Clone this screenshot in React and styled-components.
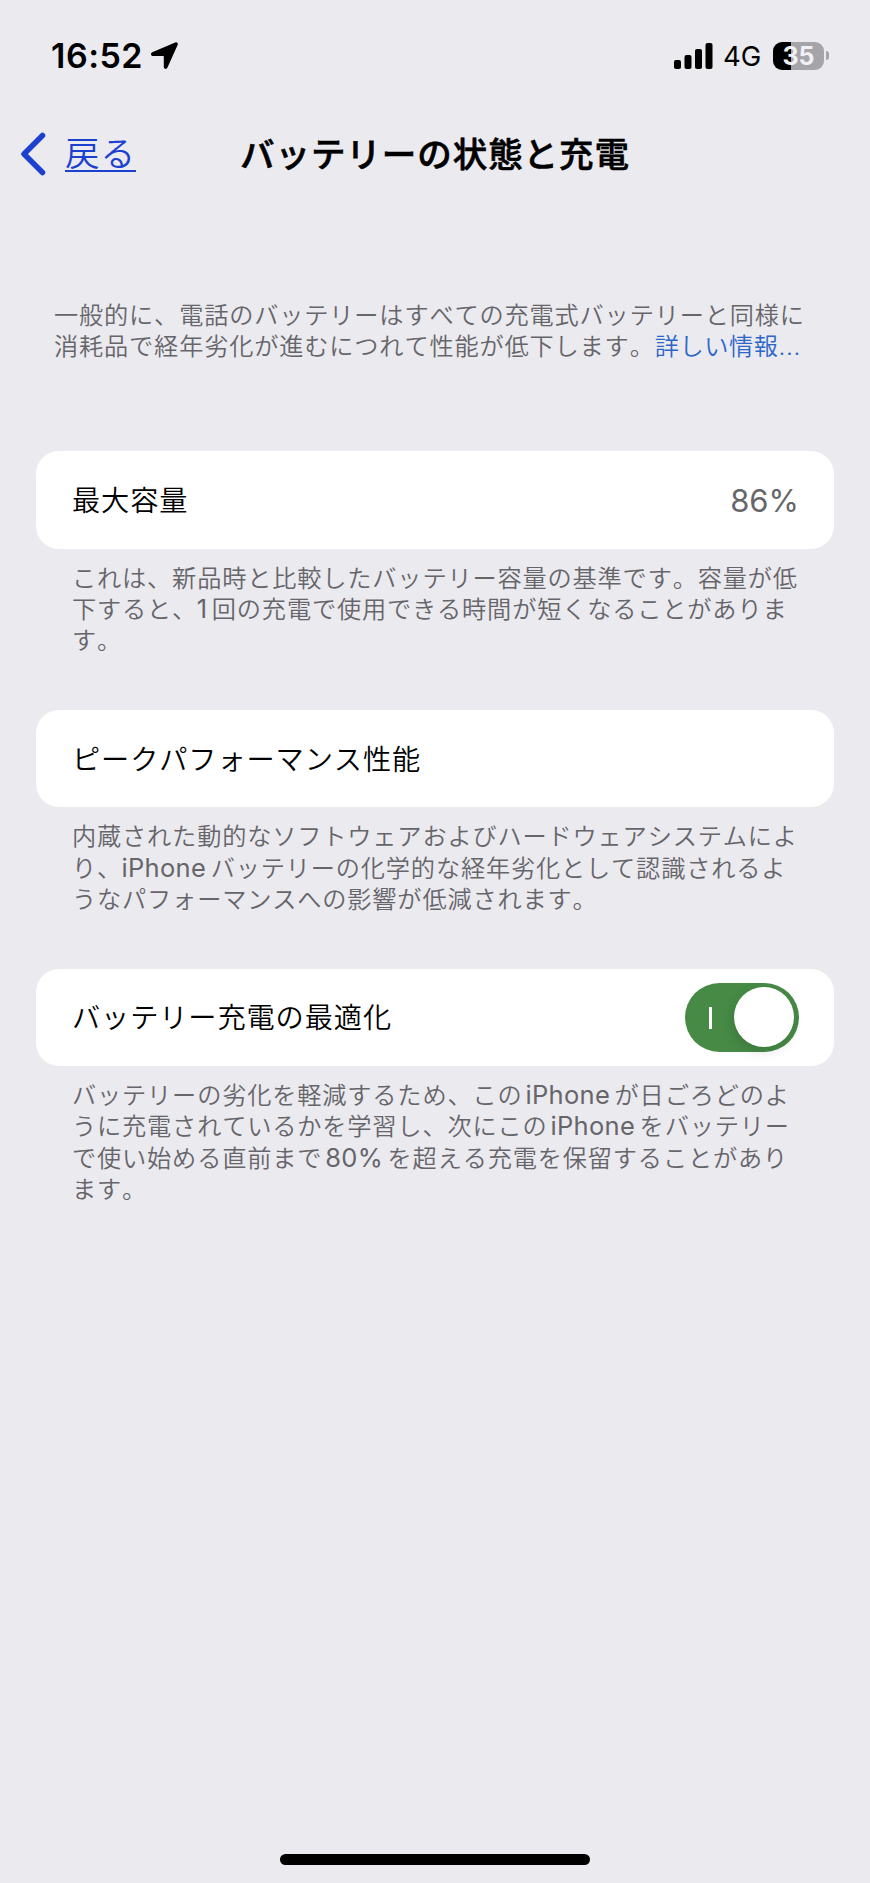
import React from 'react';
import styled, { createGlobalStyle } from 'styled-components';

const GlobalStyle = createGlobalStyle`
  *, *::before, *::after {
    box-sizing: border-box;
  }
  html {
    background: #ebeaef;
  }
  body {
    margin: 0;
    font-family: Inter, 'Noto Sans CJK JP', sans-serif;
    font-kerning: none;
    color: #000;
  }
`;

const Screen = styled.div`
  width: 870px;
  height: 1883px;
  display: flex;
  flex-direction: column;
  background: #ebeaef;
  overflow: hidden;
`;

const StatusBar = styled.header`
  height: 111px;
  padding: 0 41px 0 51px;
  display: flex;
  align-items: center;
  justify-content: space-between;
`;

const StatusGroup = styled.div`
  display: flex;
  align-items: center;
`;

const Time = styled.span`
  width: 100px;
  font-size: 34px;
  font-weight: 600;
  line-height: 40px;
  letter-spacing: 0.5px;
  white-space: nowrap;
`;

const Network = styled.span`
  margin: 1px 0 0 10px;
  width: 50px;
  font-size: 27.5px;
  line-height: 40px;
  white-space: nowrap;
`;

const Battery = styled.span`
  width: 51px;
  height: 28px;
  border-radius: 9px;
  background: linear-gradient(to right, #000 18px, #a5a4a9 18px);
  color: #f1f0f5;
  font-size: 25px;
  font-weight: 700;
  line-height: 28px;
  text-align: center;
`;

const BatteryCap = styled.span`
  width: 3px;
  height: 9px;
  margin-left: 2px;
  border-radius: 0 4px 4px 0;
  background: #a5a4a9;
`;

const NavBar = styled.nav`
  height: 86px;
  padding: 0 20px;
  display: grid;
  grid-template-columns: 200px 1fr 200px;
  align-items: center;
`;

const Back = styled.a`
  display: flex;
  align-items: center;
  gap: 18px;
  color: #1d41cf;
`;

const BackLabel = styled.span`
  height: 36px;
  border-bottom: 2px solid currentColor;
  font-size: 34.5px;
  font-weight: 350;
  line-height: 36px;
  letter-spacing: 1px;
`;

const Title = styled.h1`
  margin: 0;
  padding-top: 1px;
  font-size: 34.5px;
  font-weight: 500;
  line-height: 44px;
  letter-spacing: 0.95px;
  text-align: center;
  white-space: nowrap;
  -webkit-text-stroke: 0.6px #000;
`;

const Note = styled.p`
  margin: 0;
  padding: ${({ $intro }) => ($intro ? '103px 36px 88.5px 54px' : '14px 36px 53.5px')};
  color: #66656a;
  font-size: 24.2px;
  font-weight: 350;
  line-height: 31.2px;
  letter-spacing: 0.84px;
`;

const Line = styled.span`
  display: block;
  white-space: nowrap;
`;

/* line-height is collapsed so the larger latin run never stretches its row */
const Latin = styled.span`
  margin-right: 4.5px;
  margin-left: ${({ $before = -0.5 }) => $before}px;
  font-size: 25.5px;
  font-weight: 400;
  line-height: 1;
  letter-spacing: 0.3px;
`;

const More = styled.a`
  color: #2c66c9;
  letter-spacing: 0.6px;
`;

const Group = styled.section`
  padding: 0 36px;
`;

const Cell = styled.div`
  height: 97.7px;
  padding: 0 35px 0 36px;
  display: flex;
  align-items: center;
  justify-content: space-between;
  border-radius: 23px;
  background: #fff;
`;

const CellLabel = styled.span`
  padding-top: 2px;
  font-size: 28.2px;
  font-weight: 350;
  line-height: 40px;
  letter-spacing: 0.9px;
`;

const CellValue = styled.span`
  padding-top: 2px;
  color: #66656a;
  font-size: 31px;
  line-height: 40px;
`;

const Toggle = styled.button`
  width: 114px;
  height: 69px;
  padding: 0 5px 0 24px;
  border: 0;
  border-radius: 35px;
  background: #468a46;
  display: flex;
  align-items: center;
  justify-content: space-between;
`;

const OnMark = styled.span`
  width: 3px;
  height: 22px;
  margin-top: 2px;
  background: #fff;
`;

const Thumb = styled.span`
  width: 60px;
  height: 60px;
  border-radius: 50%;
  background: #fff;
  box-shadow: -2px 5px 12px rgba(0, 0, 0, 0.12);
`;

const HomeIndicator = styled.div`
  width: 310px;
  height: 11px;
  margin: auto auto 18px;
  border-radius: 6px;
  background: #000;
`;

function LocationIcon() {
  return (
    <svg width="27" height="27" viewBox="0 0 27 27">
      <path d="M24.2.4 1.2 10.3c-1.900.9-1.500 3.700.7 3.700h10.300c.4 0 .6.200.6.600v10.200c0 2.400 2.800 2.800 3.700.8L26.600 2.900C27.300 1.200 26-.4 24.200.4Z" />
    </svg>
  );
}

function SignalIcon() {
  return (
    <svg width="39" height="26" viewBox="0 0 39 26">
      <rect x="0" y="17" width="7" height="9" rx="2" />
      <rect x="10.5" y="12" width="7" height="14" rx="2" />
      <rect x="21" y="6" width="7" height="20" rx="2" />
      <rect x="31.5" y="0" width="7" height="26" rx="2" />
    </svg>
  );
}

function ChevronIcon() {
  return (
    <svg width="27" height="44" viewBox="0 0 27 44" fill="none">
      <path
        d="M22.5 3.5 4 22l18.5 18.5"
        stroke="currentColor"
        strokeWidth="5.5"
        strokeLinecap="round"
        strokeLinejoin="round"
      />
    </svg>
  );
}

export default function App() {
  return (
    <>
      <GlobalStyle />
      <Screen lang="ja">
        <StatusBar>
          <StatusGroup>
            <Time>16:52</Time>
            <LocationIcon />
          </StatusGroup>
          <StatusGroup>
            <SignalIcon />
            <Network>4G</Network>
            <Battery>35</Battery>
            <BatteryCap />
          </StatusGroup>
        </StatusBar>

        <NavBar>
          <Back>
            <ChevronIcon />
            <BackLabel>戻る</BackLabel>
          </Back>
          <Title>バッテリーの状態と充電</Title>
        </NavBar>

        <main>
          <Note $intro>
            <Line>一般的に、電話のバッテリーはすべての充電式バッテリーと同様に</Line>
            <Line>
              消耗品で経年劣化が進むにつれて性能が低下します。
              <More>詳しい情報...</More>
            </Line>
          </Note>

          <Group>
            <Cell>
              <CellLabel>最大容量</CellLabel>
              <CellValue>86%</CellValue>
            </Cell>
            <Note>
              <Line>これは、新品時と比較したバッテリー容量の基準です。容量が低</Line>
              <Line>
                下すると、<Latin>1</Latin>回の充電で使用できる時間が短くなることがありま
              </Line>
              <Line>す。</Line>
            </Note>
          </Group>

          <Group>
            <Cell>
              <CellLabel>ピークパフォーマンス性能</CellLabel>
            </Cell>
            <Note>
              <Line>内蔵された動的なソフトウェアおよびハードウェアシステムによ</Line>
              <Line>
                り、<Latin>iPhone</Latin>バッテリーの化学的な経年劣化として認識されるよ
              </Line>
              <Line>うなパフォーマンスへの影響が低減されます。</Line>
            </Note>
          </Group>

          <Group>
            <Cell>
              <CellLabel>バッテリー充電の最適化</CellLabel>
              <Toggle type="button" role="switch" aria-checked="true">
                <OnMark />
                <Thumb />
              </Toggle>
            </Cell>
            <Note>
              <Line>
                バッテリーの劣化を軽減するため、この<Latin $before={3}>iPhone</Latin>が日ごろどのよ
              </Line>
              <Line>
                うに充電されているかを学習し、次にこの<Latin $before={3}>iPhone</Latin>をバッテリー
              </Line>
              <Line>
                で使い始める直前まで<Latin $before={3}>80%</Latin>を超える充電を保留することがあり
              </Line>
              <Line>ます。</Line>
            </Note>
          </Group>
        </main>

        <HomeIndicator />
      </Screen>
    </>
  );
}
